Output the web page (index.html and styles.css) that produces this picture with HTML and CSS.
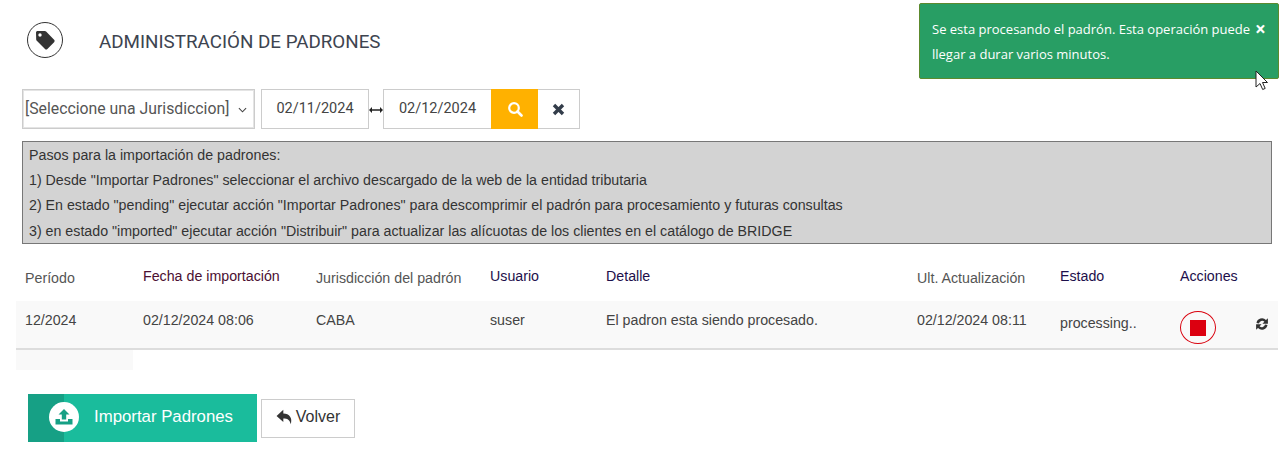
FILE: index.html
```html
<!DOCTYPE html>
<html lang="es">
<head>
<meta charset="utf-8">
<title>Administración de padrones</title>
<link rel="stylesheet" href="styles.css">
</head>
<body>
<div class="page">
  <header class="head">
    <span class="head-icon">
      <svg viewBox="0 0 24 24" width="24" height="24"><path fill="#333" d="M3 4.6C3 3.7 3.7 3 4.6 3h7.2c.5 0 1 .2 1.300.6l8 8.200c.7.7.7 1.700 0 2.400l-6.700 6.700c-.7.7-1.700.7-2.400 0l-8.200-8.200c-.4-.3-.6-.8-.6-1.300zM7 5.300a1.700 1.700 0 1 0 0 3.400 1.700 1.700 0 0 0 0-3.400z" fill-rule="evenodd"/></svg>
    </span>
    <h1 class="title">ADMINISTRACIÓN DE PADRONES</h1>
  </header>

  <div class="filters">
    <div class="select"><span>[Seleccione una Jurisdiccion]</span>
      <svg class="chev" viewBox="0 0 10 6" width="9" height="6"><path d="M1 1l4 4 4-4" fill="none" stroke="#444" stroke-width="1.200"/></svg>
    </div>
    <div class="date">02/11/2024</div>
    <svg class="range" viewBox="0 0 14 6" width="14" height="6"><path d="M0 3l3-3v2.200h8V0l3 3-3 3V3.800H3V6z" fill="#222"/></svg>
    <div class="date date-b">02/12/2024</div>
    <button class="btn-search" type="button">
      <svg viewBox="0 0 16 16" width="16" height="16"><circle cx="7" cy="7" r="4.800" fill="none" stroke="#fff" stroke-width="2.200"/><path d="M10.500 10.500l4 4" stroke="#fff" stroke-width="2.600" stroke-linecap="round"/></svg>
    </button>
    <button class="btn-clear" type="button">
      <svg viewBox="0 0 13 13" width="13" height="13"><path d="M2 2l9 9M11 2l-9 9" stroke="#333d4a" stroke-width="3.400"/></svg>
    </button>
  </div>

  <section class="steps">
    <p>Pasos para la importación de padrones:</p>
    <p>1) Desde "Importar Padrones" seleccionar el archivo descargado de la web de la entidad tributaria</p>
    <p>2) En estado "pending" ejecutar acción "Importar Padrones" para descomprimir el padrón para procesamiento y futuras consultas</p>
    <p>3) en estado "imported" ejecutar acción "Distribuir" para actualizar las alícuotas de los clientes en el catálogo de BRIDGE</p>
  </section>

  <div class="grid grid-head">
    <span class="c1 th-gray">Período</span>
    <span class="c2 th-maroon up">Fecha de importación</span>
    <span class="c3 th-gray">Jurisdicción del padrón</span>
    <span class="c4 th-navy up">Usuario</span>
    <span class="c5 th-navy up">Detalle</span>
    <span class="c6 th-gray">Ult. Actualización</span>
    <span class="c7 th-navy up">Estado</span>
    <span class="c8 th-navy up">Acciones</span>
  </div>
  <div class="grid grid-row">
    <span class="c1">12/2024</span>
    <span class="c2">02/12/2024 08:06</span>
    <span class="c3">CABA</span>
    <span class="c4">suser</span>
    <span class="c5">El padron esta siendo procesado.</span>
    <span class="c6">02/12/2024 08:11</span>
    <span class="c7 down">processing..</span>
    <span class="c8 actions">
      <span class="stop"><i></i></span>
      <svg class="refresh" viewBox="0 0 14 14" width="14" height="14"><path d="M1.500 6A5.600 5.600 0 0 1 11 3L12.900 1.200v5.500H7.400l2-2A3.200 3.200 0 0 0 4 6.400zM12.500 8A5.600 5.600 0 0 1 3 11L1.100 12.800V7.300H6.600l-2 2A3.200 3.200 0 0 0 10 7.600z" fill="#333"/></svg>
    </span>
  </div>
  <div class="stub"></div>

  <div class="footer-actions">
    <button class="btn-import" type="button">
      <span class="import-side"></span>
      <span class="import-icon">
        <svg viewBox="0 0 20 20" width="20" height="20"><path d="M10 2l5.500 5.500h-3.300v5h-4.400v-5H4.500z" fill="#16a085"/><path d="M1.500 12h4.500v2.500h8V12h4.500v5.500h-17z" fill="#16a085"/></svg>
      </span>
      <span class="import-text">Importar Padrones</span>
    </button>
    <button class="btn-back" type="button">
      <svg viewBox="0 0 16 14" width="18" height="16"><path d="M6.500.5L.5 6l6 5.500V8.300c3.500 0 6 1 6.500 5.200C15 8 12 3.800 6.500 3.800z" fill="#333"/></svg>
      <span>Volver</span>
    </button>
  </div>
</div>

<aside class="toast">
  <span class="toast-text">Se esta procesando el padrón. Esta operación puede llegar a durar varios minutos.</span>
  <span class="toast-close">×</span>
</aside>
<svg class="cursor" viewBox="0 0 14 22" width="14" height="22"><path d="M1 1v16l4-3.500 2.700 6 2.500-1.100-2.700-5.900h5z" fill="#fff" stroke="#222" stroke-width="1"/></svg>
</body>
</html>
```
FILE: styles.css
```css
* { box-sizing: border-box; }
html, body { margin: 0; padding: 0; }
body {
  width: 1283px;
  height: 476px;
  overflow: hidden;
  background: #fff;
  font-family: "Liberation Sans", Arial, sans-serif;
  font-size: 14.22px;
  color: #333;
  position: relative;
}
.page { padding: 21px 5px 0 16px; }
.head { display: flex; align-items: center; height: 37px; padding-left: 11px; }
.head-icon {
  width: 36px; height: 36px;
  border: 1px solid #333;
  border-radius: 50%;
  display: flex; align-items: center; justify-content: center;
  flex: none;
}
.title {
  margin: 4px 0 0 36px;
  font-size: 18.8px;
  font-weight: 400;
  color: #3d4450;
  font-family: Roboto, "Liberation Sans", sans-serif;
}
.filters { display: flex; align-items: center; margin: 31px 0 0 6px; height: 40px; }
.select {
  width: 233px; height: 40px;
  border: 1px solid #ccc;
  box-shadow: inset 0 0 0 1px #e4e4e4;
  padding: 0 7px 2px 2px;
  display: flex; align-items: center; justify-content: space-between;
  font-family: Roboto, "Liberation Sans", sans-serif;
  font-size: 15.8px;
  color: #555;
}
.chev { flex: none; margin-top: 3px; }
.date {
  width: 108px; height: 40px;
  margin-left: 6px;
  border: 1px solid #ccc;
  padding-bottom: 2px;
  display: flex; align-items: center; justify-content: center;
  font-family: Roboto, "Liberation Sans", sans-serif;
  font-size: 14.5px;
  color: #444;
}
.range { flex: none; margin-top: 1px; }
.date.date-b { margin-left: 0; border-right: 0; }
.btn-search {
  width: 47px; height: 40px;
  background: #ffb100;
  border: 0; padding: 0;
  display: flex; align-items: center; justify-content: center;
}
.btn-clear {
  width: 42px; height: 40px;
  background: #fff;
  border: 1px solid #ccc; border-left: 0;
  padding: 0;
  display: flex; align-items: center; justify-content: center;
}
.steps {
  margin: 12px 0 0 6px;
  width: 1250px;
  height: 103px;
  background: #d3d3d3;
  border: 1px solid #777;
  padding: 1px 6px 0;
  color: #333;
}
.steps p { margin: 0; line-height: 25px; height: 25.2px; }
.grid {
  display: grid;
  grid-template-columns: 118px 173px 174px 116px 311px 143px 120px 107px;
  width: 1262px;
}
.grid > span { padding-left: 9px; }
.grid-head { height: 57px; align-items: center; padding-top: 10px; }
.th-gray { color: #555; padding-top: 1px; }
.th-maroon { color: #4b0f32; }
.th-navy { color: #1d0f4b; }
.up { margin-top: -3px; }
.grid-row {
  height: 49px;
  background: #f9f9f9;
  border-bottom: 2px solid #ddd;
  align-items: start;
  color: #444;
  padding-top: 11px;
}
.down { margin-top: 3px; }
.actions { display: flex; align-items: center; justify-content: space-between; padding-right: 9px; margin-top: -1px; }
.stop {
  width: 36px; height: 33px;
  border: 1px solid #d9000d;
  border-radius: 50%;
  display: flex; align-items: center; justify-content: center;
}
.stop i { display: block; width: 16px; height: 16px; background: #dc0010; }
.refresh { margin-top: -8px; }
.stub { width: 117px; height: 20px; background: #f9f9f9; }
.footer-actions { display: flex; align-items: center; margin: 24px 0 0 12px; }
.btn-import {
  width: 229px; height: 48px;
  background: #1abc9c;
  border: 0; padding: 0 0 2px;
  display: flex; align-items: center;
  color: #fff;
  font-family: "Liberation Sans", Arial, sans-serif;
  font-size: 16.8px;
  position: relative;
}
.import-side { position: absolute; left: 0; top: 0; width: 36px; height: 48px; background: #16a085; }
.import-icon {
  position: relative;
  margin-left: 21px;
  width: 30px; height: 30px;
  border-radius: 50%;
  background: #fff;
  display: flex; align-items: center; justify-content: center;
}
.import-text { margin-left: 15px; }
.btn-back {
  width: 94px; height: 39px;
  margin-left: 4px;
  background: #fff;
  border: 1px solid #ccc;
  padding: 0 0 2px;
  display: flex; align-items: center; justify-content: center; gap: 2px;
  font-family: "Liberation Sans", Arial, sans-serif;
  font-size: 16px;
  color: #333;
}
.toast {
  position: absolute;
  left: 919px; top: 3px;
  width: 360px; height: 76px;
  background: #289e64;
  border: 1px solid #5c8a2e;
  border-radius: 2px;
  color: #fff;
  font-family: "Open Sans", "Liberation Sans", sans-serif;
  font-size: 13px;
  line-height: 25px;
  padding: 13px 12px;
}
.toast-text { display: block; width: 322px; }
.toast-close { position: absolute; left: 335px; top: 13px; font-size: 19px; font-weight: 700; }
.cursor { position: absolute; left: 1255px; top: 70px; }
```
